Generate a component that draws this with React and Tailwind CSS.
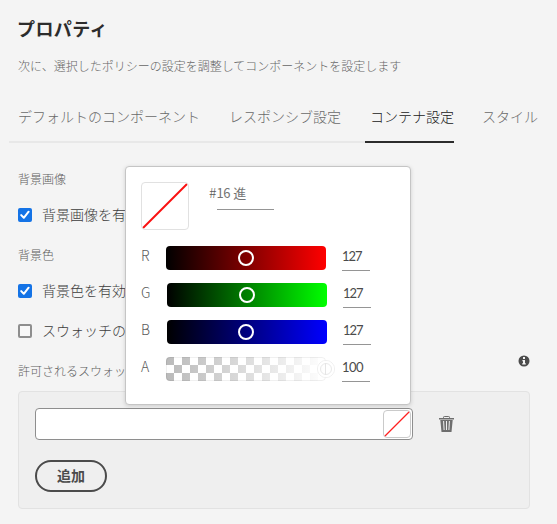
const tabs = [
  { label: 'デフォルトのコンポーネント', box: 'ml-[9px] pl-[9px] pr-[29px] border-[#e8e8e8] text-[#6a6a6a]' },
  { label: 'レスポンシブ設定', box: 'pr-6 border-[#e8e8e8] text-[#6a6a6a]' },
  { label: 'コンテナ設定', box: 'pl-[5px] border-[#2c2c2c] text-[#202020]' },
  { label: 'スタイル', box: 'ml-[28px] border-transparent text-[#6a6a6a]' },
];

const channels = [
  { name: 'R', value: '127', track: 'bg-[linear-gradient(to_right,#000000,#ff0000)]', shift: '', knob: 'ml-[72px]' },
  { name: 'G', value: '127', track: 'bg-[linear-gradient(to_right,#000000,#00ff00)]', shift: 'ml-px', knob: 'ml-[72px]' },
  { name: 'B', value: '127', track: 'bg-[linear-gradient(to_right,#000000,#0000ff)]', shift: 'ml-px', knob: 'ml-[71px]' },
];

function Checkbox({ checked, label, className }) {
  return (
    <label className={`flex h-6 items-center gap-[10px] text-[14px] whitespace-nowrap text-[#3c3c3c] ${className}`}>
      {checked ? (
        <span className="flex size-[14px] shrink-0 items-center justify-center rounded-[2px] bg-[#1473e6]">
          <svg width="10" height="10" viewBox="0 0 10 10" fill="none" stroke="white" strokeWidth="2" strokeLinecap="round" strokeLinejoin="round">
            <path d="M1.2 5.1 3.8 7.8 8.6 1.7" />
          </svg>
        </span>
      ) : (
        <span className="size-[14px] shrink-0 rounded-[2px] border-2 border-[#8e8e8e] bg-[#f8f8f8]" />
      )}
      <span className="pb-[2px]">{label}</span>
    </label>
  );
}

function AlphaTrack() {
  const squares = [];
  for (let row = 0; row < 3; row++) {
    for (let col = 0; col < 20; col++) {
      if ((row + col) % 2 === 0) squares.push(<rect key={`${row}-${col}`} x={col * 8} y={row * 8} width="8" height="8" fill="url(#fade)" />);
    }
  }
  return (
    <svg className="h-[26px] w-[172px]" viewBox="0 -1 172 26">
      <defs>
        <linearGradient id="fade" gradientUnits="userSpaceOnUse" x1="0" y1="0" x2="160" y2="0">
          <stop offset="0" stopColor="#bababa" />
          <stop offset="1" stopColor="#ffffff" />
        </linearGradient>
        <clipPath id="round"><rect width="160" height="24" rx="4" /></clipPath>
      </defs>
      <g clipPath="url(#round)" shapeRendering="crispEdges">{squares}</g>
      <rect x=".5" y=".5" width="159" height="23" rx="3.5" fill="none" stroke="#000" strokeOpacity=".06" />
      <circle cx="160" cy="12" r="8.5" fill="none" stroke="#efefef" />
      <circle cx="160" cy="12" r="7" fill="none" stroke="#fff" strokeWidth="2" />
      <circle cx="160" cy="12" r="5.5" fill="none" stroke="#e9e9e9" />
      <path d="M159.5 6v12" stroke="#e5e5e5" />
    </svg>
  );
}

function ColorPopover() {
  return (
    <div className="absolute top-[166px] left-[125px] h-[239px] w-[286px] rounded-[4px] border border-[#c5c5c5] bg-white pt-[15px] pl-[15px] shadow-[0_1px_4px_rgba(0,0,0,0.15)]">
      <div className="flex h-16 items-start">
        <svg className="size-12 rounded-[4px] border border-[#e1e1e1]" viewBox="0 0 46 46">
          <path d="M1 45 45 1" stroke="#fa1010" strokeWidth="2" />
        </svg>
        <span className="ml-5 text-[14px] leading-5 text-[#5a5a5a]">#</span>
        <div className="h-7 w-[57px] border-b border-[#959595] pt-px text-[13px] leading-5 font-normal tracking-[-0.5px] whitespace-nowrap text-[#747474] [word-spacing:1px]">
          16 進
        </div>
      </div>
      {channels.map((c) => (
        <div key={c.name} className="flex h-[37px] items-start">
          <span className="-mt-px w-[25px] text-[14px] leading-5 text-[#5a5a5a]">{c.name}</span>
          <div className={`flex h-6 w-40 items-center rounded-[4px] ${c.track} ${c.shift}`}>
            <span className={`size-4 rounded-full border-2 border-white ${c.knob}`} />
          </div>
          <span className="ml-4 h-[25px] w-7 border-b border-[#959595] font-[Lato,sans-serif] text-[13px] leading-5 font-normal tracking-[-1.1px] text-[#4b4b4b]">{c.value}</span>
        </div>
      ))}
      <div className="flex h-[37px] items-start">
        <span className="-mt-px w-[25px] text-[14px] leading-5 text-[#5a5a5a]">A</span>
        <div className="-mt-px w-[176px]"><AlphaTrack /></div>
        <span className="h-[25px] w-7 border-b border-[#959595] font-[Lato,sans-serif] text-[13px] leading-5 font-normal tracking-[-0.6px] text-[#4b4b4b]">100</span>
      </div>
    </div>
  );
}

export default function App() {
  return (
    <div className="relative h-[524px] w-[557px] overflow-hidden bg-[#f4f4f4] font-['Noto_Sans_CJK_JP',sans-serif] font-light">
      <h1 className="ml-[17px] pt-[16px] text-[18px] leading-6 font-bold tracking-[0.4px] text-[#2c2c2c]">プロパティ</h1>
      <p className="mt-[16px] ml-[18px] text-[12px] leading-5 text-[#666666]">次に、選択したポリシーの設定を調整してコンポーネントを設定します</p>

      <nav className="mt-[29px] flex h-[38px] text-[14px] leading-[23px] whitespace-nowrap">
        {tabs.map((t) => (
          <span key={t.label} className={`h-[38px] shrink-0 border-b-2 ${t.box}`}>{t.label}</span>
        ))}
      </nav>

      <main className="pl-[18px]">
        <h2 className="mt-[26px] text-[12px] leading-5 text-[#5e5e5e]">背景画像</h2>
        <Checkbox checked label="背景画像を有効化" className="mt-[14px]" />
        <h2 className="mt-[18px] text-[12px] leading-5 text-[#5e5e5e]">背景色</h2>
        <Checkbox checked label="背景色を有効化" className="mt-[14px]" />
        <Checkbox label="スウォッチのみ" className="mt-4" />
        <div className="mt-[18px] flex h-5 w-[512px] items-start justify-between">
          <h2 className="text-[12px] leading-5 text-[#5e5e5e]">許可されるスウォッチ</h2>
          <svg className="-mt-[6px] size-[12px]" viewBox="0 0 12 12">
            <circle cx="6" cy="6" r="5.5" fill="#4b4b4b" />
            <path d="M5 2h2v2H5zM4.4 5H7v3.2h.8v1.3H4.2V8.2H5V6.2h-.6z" fill="#f4f4f4" />
          </svg>
        </div>

        <section className="mt-[10px] h-[118px] w-[512px] rounded-[4px] border border-[#e2e2e2] bg-[#efefef] pt-4 pl-4">
          <div className="flex items-center">
            <div className="flex h-8 w-[378px] items-center justify-end rounded-[4px] border border-[#8e8e8e] bg-white pr-px">
              <svg className="size-7 rounded-[4px] border border-[#cacaca]" viewBox="0 0 26 26">
                <path d="M.5 25.5 25.5.5" stroke="#ff2020" strokeWidth="1.2" />
              </svg>
            </div>
            <svg className="ml-[26px] h-4 w-[15px]" viewBox="0 0 15 16">
              <path d="M4.5 2.5V1.3Q4.5.5 5.3.5h4.4q.8 0 .8.8v1.2" fill="none" stroke="#6e6e6e" />
              <path d="M0 2h15v1.5H0zM1.3 4h12.4L12.5 16h-10z" fill="#6e6e6e" />
              <path d="M4.6 5 5.1 14M7.5 5V14M10.4 5 9.9 14" fill="none" stroke="#efefef" />
            </svg>
          </div>
          <button className="mt-5 block h-8 w-[72px] rounded-full border-2 border-[#4b4b4b] pb-[2px] text-[14px] leading-[24px] font-bold text-[#4b4b4b]">追加</button>
        </section>
      </main>

      <ColorPopover />
    </div>
  );
}
